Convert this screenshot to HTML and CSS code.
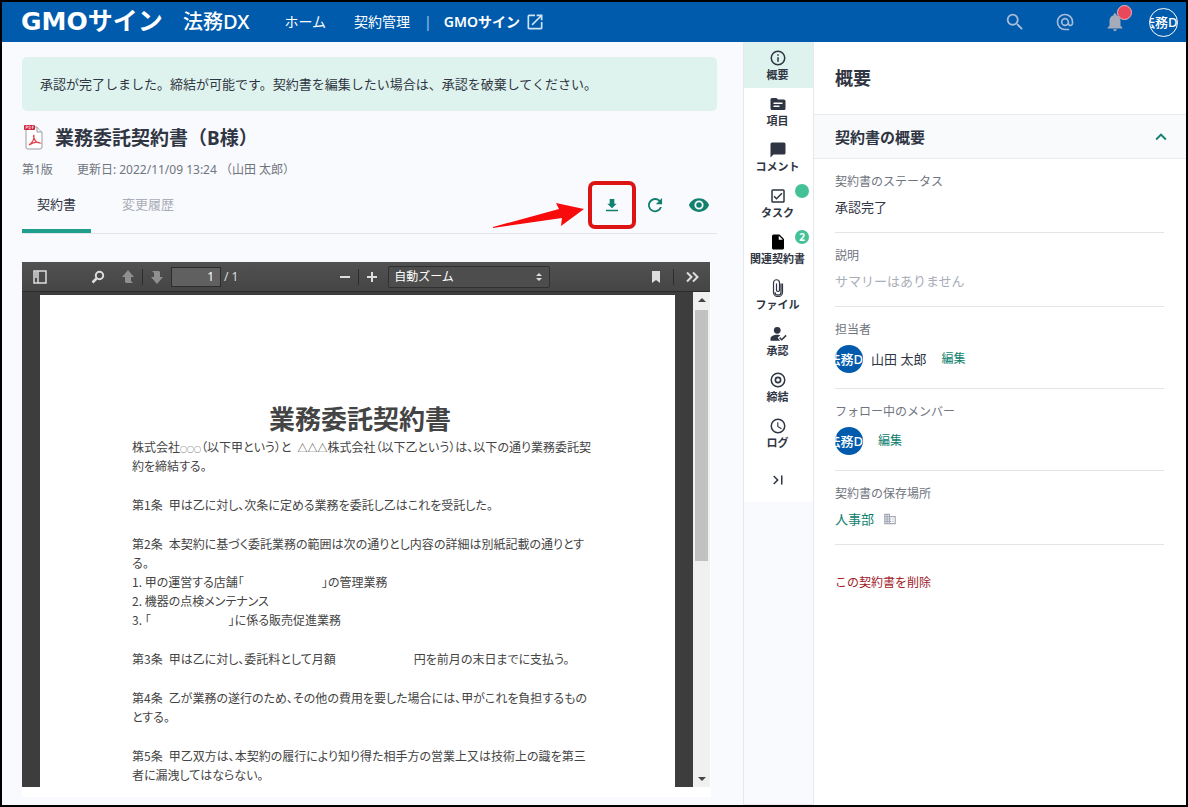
FILE: index.html
```html
<!DOCTYPE html>
<html lang="ja">
<head>
  <meta charset="UTF-8">
  <meta name="viewport" content="width=device-width, initial-scale=1.0">
  <title>業務委託契約書（B様）</title>
  <link rel="stylesheet" href="styles.css">
</head>
<body>
  <header class="header">
    <a class="logo" href="#"><span class="logo-name">GMOサイン</span><span class="logo-sub">法務DX</span></a>
    <nav class="nav">
      <a href="#">ホーム</a>
      <a href="#">契約管理</a>
      <span class="nav-line">|</span>
      <a class="nav-bold" href="#">GMOサイン
        <svg width="20" height="20" viewBox="0 0 24 24"><path d="M19 19H5V5h7V3H5a2 2 0 0 0-2 2v14a2 2 0 0 0 2 2h14c1.100 0 2-.9 2-2v-7h-2v7zM14 3v2h3.590l-9.830 9.830 1.410 1.410L19 6.410V10h2V3h-7z"/></svg>
      </a>
    </nav>
    <div class="header-tools">
      <button aria-label="検索"><svg width="22" height="22" viewBox="0 0 24 24"><path d="M15.500 14h-.79l-.28-.27A6.470 6.470 0 0 0 16 9.500 6.500 6.500 0 1 0 9.500 16c1.610 0 3.090-.59 4.230-1.570l.27.28v.79l5 4.990L20.490 19l-4.990-5zm-6 0a4.500 4.500 0 1 1 0-9 4.500 4.500 0 0 1 0 9z"/></svg></button>
      <button aria-label="メンション"><svg width="20" height="20" viewBox="0 0 24 24"><path d="M12 2a10 10 0 0 0 0 20h5v-2h-5c-4.340 0-8-3.660-8-8s3.660-8 8-8 8 3.660 8 8v1.430c0 .79-.71 1.570-1.500 1.570s-1.500-.78-1.500-1.570V12a5 5 0 1 0-1.460 3.540c.65.89 1.770 1.460 2.960 1.460 1.970 0 3.500-1.600 3.500-3.570V12A10 10 0 0 0 12 2zm0 13a3 3 0 1 1 0-6 3 3 0 0 1 0 6z"/></svg></button>
      <button class="bell" aria-label="通知"><svg width="22" height="22" viewBox="0 0 24 24"><path d="M12 22c1.100 0 2-.9 2-2h-4c0 1.100.9 2 2 2zm6-6v-5c0-3.070-1.640-5.640-4.500-6.320V4a1.500 1.500 0 0 0-3 0v.68C7.630 5.360 6 7.920 6 11v5l-2 2v1h16v-1l-2-2z"/></svg><span class="bell-dot"></span></button>
      <button class="avatar avatar-me"><span>法務DX</span></button>
    </div>
  </header>

  <main class="main">
    <section class="content">
      <p class="notice">承認が完了しました。締結が可能です。契約書を編集したい場合は、承認を破棄してください。</p>

      <div class="title-row">
        <svg width="20" height="26" viewBox="0 0 20 26">
          <path d="M3 2h10l5 5v15a2 2 0 0 1-2 2H4a2 2 0 0 1-2-2V3z" fill="#fff" stroke="#9a9da2"/>
          <path d="M13 2v5h5" fill="#eee" stroke="#9a9da2"/>
          <rect width="11" height="5" rx="1" fill="#d2233c"/>
          <path d="M2 4V1h1.500v1.500H2M5 1v3h1L7 2.500 6 1zM8.500 4V1h1.500M8.500 2.500h1" fill="none" stroke="#fff" stroke-width=".6"/>
          <path d="M5 20c3-2 5-5 5-9 0-1-1-1 0 2 1 3 3 5 6 5-3-2-8 0-11 2z" fill="none" stroke="#e2404c" stroke-width="1.200"/>
        </svg>
        <h1>業務委託契約書（B様）</h1>
      </div>
      <div class="meta"><span>第1版</span><span>更新日: 2022/11/09 13:24 （山田 太郎）</span></div>

      <div class="tabs">
        <button class="tab active">契約書</button>
        <button class="tab">変更履歴</button>
        <div class="actions">
          <button class="download" aria-label="ダウンロード">
            <svg width="16" height="16" viewBox="0 0 24 24"><path d="M19 10h-3.500V3h-7v7H5l7 7 7-7zM3 19v2.500h18V19H3z"/></svg>
            <svg class="arrow" width="94" height="26" viewBox="0 0 94 26"><path d="M1 24 67 6 64 0 92 6 69 23 70 15 1 25z"/></svg>
            <span class="marker"></span>
          </button>
          <button aria-label="更新"><svg width="20" height="20" viewBox="0 0 24 24"><path d="M18 6a8.500 8.500 0 1 0 2.300 8.500H18A6.300 6.300 0 1 1 16.400 7.600L13 11h7.500V3.500z"/></svg></button>
          <button aria-label="プレビュー"><svg width="22" height="22" viewBox="0 0 24 24"><path d="M12 4.500C7 4.500 2.730 7.610 1 12c1.730 4.390 6 7.500 11 7.500s9.270-3.110 11-7.500c-1.730-4.390-6-7.500-11-7.500zM12 17a5 5 0 1 1 0-10 5 5 0 0 1 0 10zm0-8a3 3 0 1 0 0 6 3 3 0 0 0 0-6z"/></svg></button>
        </div>
      </div>

      <div class="frame">
        <div class="viewer">
          <div class="toolbar">
            <div class="tool-group">
              <button class="tool-side" aria-label="サイドバー"><svg width="14" height="14" viewBox="0 0 14 14"><path d="M1 1h12v12H1zM5 1v12M2 3h2M2 5h2M2 7h2" fill="none" stroke="#ddd" stroke-width="1.500"/></svg></button>
              <button class="tool-find" aria-label="検索"><svg width="14" height="14" viewBox="0 0 14 14"><circle cx="8.500" cy="5.500" r="3.700" fill="none" stroke="#ddd" stroke-width="2"/><path d="M5.500 8.500 1.500 12.500" stroke="#ddd" stroke-width="2.500"/></svg></button>
              <button class="dim" aria-label="前のページ"><svg width="14" height="14" viewBox="0 0 14 14"><path d="M7 0 13 7H10V11l2 2H5L4 12V7H1z"/></svg></button>
              <span class="split"></span>
              <button class="dim" aria-label="次のページ"><svg width="14" height="14" viewBox="0 0 14 14"><path d="M7 14 1 7H4V3L2 1H9l1 1v5h3z"/></svg></button>
              <input class="page-no" type="text" value="1" aria-label="ページ">
              <span class="page-total">/ 1</span>
            </div>
            <div class="tool-group">
              <button aria-label="縮小"><svg width="12" height="12" viewBox="0 0 12 12"><path d="M1 5h10v2H1z"/></svg></button>
              <span class="split"></span>
              <button aria-label="拡大"><svg width="12" height="12" viewBox="0 0 12 12"><path d="M1 5h4V1h2v4h4v2H7v4H5V7H1z"/></svg></button>
              <div class="zoom-box">
                <select class="zoom" aria-label="ズーム"><option>自動ズーム</option></select>
                <svg class="zoom-mark" width="6" height="8" viewBox="0 0 6 8"><path d="M3 0 6 3H0zM3 8 0 5h6z"/></svg>
              </div>
            </div>
            <div class="tool-group tool-end">
              <button aria-label="ブックマーク"><svg width="10" height="14" viewBox="0 0 10 14"><path d="M1 1h8v12L5 10l-4 3z"/></svg></button>
              <span class="split"></span>
              <button aria-label="その他"><svg width="14" height="12" viewBox="0 0 14 12"><path d="M1 1.500 5.500 6 1 10.500M7 1.500 11.500 6 7 10.500" fill="none" stroke="#ddd" stroke-width="2"/></svg></button>
            </div>
          </div>
          <div class="viewer-body">
            <article class="page">
              <h2>業務委託契約書</h2>
              <p>株式会社<span class="small-mark">○○○</span>（以下甲という）と&ensp;<span class="tri-mark">△△△</span>株式会社（以下乙という）は、以下の通り業務委託契<br>約を締結する。</p>
              <p>第1条&ensp;甲は乙に対し、次条に定める業務を委託し乙はこれを受託した。</p>
              <p>第2条&ensp;本契約に基づく委託業務の範囲は次の通りとし内容の詳細は別紙記載の通りとす<br>る。<br>
                1. 甲の運営する店舗「<span class="blank"></span>」の管理業務<br>
                2. 機器の点検メンテナンス<br>
                3. 「<span class="blank"></span>」に係る販売促進業務</p>
              <p>第3条&ensp;甲は乙に対し、委託料として月額<span class="blank"></span>円を前月の末日までに支払う。</p>
              <p>第4条&ensp;乙が業務の遂行のため、その他の費用を要した場合には、甲がこれを負担するもの<br>とする。</p>
              <p>第5条&ensp;甲乙双方は、本契約の履行により知り得た相手方の営業上又は技術上の識を第三<br>者に漏洩してはならない。</p>
            </article>
            <div class="scrollbar">
              <svg width="8" height="5" viewBox="0 0 8 5"><path d="M4 0 8 4H0z"/></svg>
              <span class="thumb"></span>
              <svg width="8" height="5" viewBox="0 0 8 5"><path d="M4 5 0 1h8z"/></svg>
            </div>
          </div>
        </div>
      </div>
    </section>

    <nav class="rail">
      <button class="rail-item current"><svg width="18" height="18" viewBox="0 0 24 24"><path d="M11 7h2v2h-2zm0 4h2v6h-2zm1-9a10 10 0 1 0 0 20 10 10 0 0 0 0-20zm0 18a8 8 0 1 1 0-16 8 8 0 0 1 0 16z"/></svg>概要</button>
      <button class="rail-item"><svg width="18" height="18" viewBox="0 0 24 24"><path d="M20 6h-8l-2-2H4a2 2 0 0 0-2 2v12c0 1.100.9 2 2 2h16a2 2 0 0 0 2-2V8a2 2 0 0 0-2-2zm-6 10H6v-2h8v2zm4-4H6v-2h12v2z"/></svg>項目</button>
      <button class="rail-item"><svg width="18" height="18" viewBox="0 0 24 24"><path d="M20 2H4a2 2 0 0 0-2 2v18l4-4h14a2 2 0 0 0 2-2V4a2 2 0 0 0-2-2z"/></svg>コメント</button>
      <button class="rail-item"><svg width="18" height="18" viewBox="0 0 24 24"><path d="M19 3H5a2 2 0 0 0-2 2v14c0 1.100.9 2 2 2h14a2 2 0 0 0 2-2V5a2 2 0 0 0-2-2zm0 16H5V5h14v14zM18 9l-1.400-1.400-6.600 6.600-2.600-2.600L6 13l4 4z"/></svg>タスク<span class="badge"></span></button>
      <button class="rail-item"><svg class="ink" width="18" height="18" viewBox="0 0 24 24"><path d="M14 2H6a2 2 0 0 0-2 2v16c0 1.100.9 2 2 2h12a2 2 0 0 0 2-2V8l-6-6zm-1 7V3.500L18.500 9H13z"/></svg>関連契約書<span class="badge">2</span></button>
      <button class="rail-item"><svg width="20" height="18" viewBox="0 0 24 24"><path d="M18 6v11.500a6 6 0 0 1-12 0V5a4 4 0 0 1 8 0v10.500a2.500 2.500 0 0 1-4 0V6M16 6v11.500a4 4 0 0 1-8 0" fill="none" stroke="#2f3542" stroke-width="1.600"/></svg>ファイル</button>
      <button class="rail-item"><svg width="18" height="18" viewBox="0 0 24 24"><circle cx="11" cy="7" r="4.500"/><path d="M2 21v-3c0-3 5-5 9-5 2 0 3 .3 4 .8L11.500 17l3.500 4zM23.500 14.500 17 21l-3.500-3.500 1.400-1.400 2.100 2.100 5.100-5.100z"/></svg>承認</button>
      <button class="rail-item"><svg width="18" height="18" viewBox="0 0 24 24"><path d="M12 2a10 10 0 1 0 0 20 10 10 0 0 0 0-20zm0 18a8 8 0 1 1 0-16 8 8 0 0 1 0 16z"/><circle cx="12" cy="12" r="3.500" fill="none" stroke="#2f3542" stroke-width="2.200"/></svg>締結</button>
      <button class="rail-item"><svg width="18" height="18" viewBox="0 0 24 24"><path d="M12 2a10 10 0 1 0 0 20 10 10 0 0 0 0-20zm0 18a8 8 0 1 1 0-16 8 8 0 0 1 0 16zm.5-13H11v6l5.200 3.200.8-1.300-4.500-2.700V7z"/></svg>ログ</button>
      <button class="rail-item" aria-label="閉じる"><svg width="18" height="18" viewBox="0 0 24 24"><path d="M5.600 7.400 10.200 12l-4.600 4.600L7 18l6-6-6-6zM16 6h2v12h-2z"/></svg></button>
    </nav>

    <aside class="side">
      <h2 class="side-title">概要</h2>
      <h3 class="side-head">契約書の概要
        <svg width="22" height="22" viewBox="0 0 24 24"><path d="m12 8-6 6 1.410 1.410L12 10.830l4.590 4.580L18 14z"/></svg>
      </h3>
      <div class="side-body">
        <div class="item"><div class="label">契約書のステータス</div><div class="value">承認完了</div></div>
        <div class="item"><div class="label">説明</div><div class="value empty">サマリーはありません</div></div>
        <div class="item"><div class="label">担当者</div><div class="value"><span class="avatar"><span>法務DX</span></span><span class="person">山田 太郎</span><a class="edit" href="#">編集</a></div></div>
        <div class="item"><div class="label">フォロー中のメンバー</div><div class="value"><span class="avatar"><span>法務DX</span></span><a class="edit" href="#">編集</a></div></div>
        <div class="item"><div class="label">契約書の保存場所</div><div class="value"><a href="#">人事部</a><svg class="building" width="14" height="14" viewBox="0 0 24 24"><path d="M12 7V3H2v18h20V7H12zM6 19H4v-2h2v2zm0-4H4v-2h2v2zm0-4H4V9h2v2zm0-4H4V5h2v2zm4 12H8v-2h2v2zm0-4H8v-2h2v2zm0-4H8V9h2v2zm0-4H8V5h2v2zm10 12h-8v-2h2v-2h-2v-2h2v-2h-2V9h8v10zm-2-8h-2v2h2v-2zm0 4h-2v2h2v-2z"/></svg></div></div>
        <button class="delete">この契約書を削除</button>
      </div>
    </aside>
  </main>
</body>
</html>
```
FILE: styles.css
```css
* {
  box-sizing: border-box;
}
body {
  margin: 0;
  height: 100vh;
  border: 2px solid #000;
  display: flex;
  flex-direction: column;
  overflow: hidden;
  background: #f9fafd;
  color: #2f3542;
  font-family: "Noto Sans", "Noto Sans CJK JP", sans-serif;
  font-size: 13px;
  line-height: 20px;
}
h1, h2, h3, p { margin: 0; }
a { color: #0f7f6e; text-decoration: none; }
button {
  padding: 0;
  border: none;
  background: none;
  color: inherit;
  font: inherit;
  cursor: pointer;
}
svg { display: block; flex-shrink: 0; }

/* header */
.header {
  flex: 0 0 40px;
  display: flex;
  align-items: center;
  padding: 0 8px 0 19px;
  background: #005bac;
  color: #fff;
}
.header a { color: #fff; white-space: nowrap; }
.logo {
  display: flex;
  align-items: center;
  gap: 12px;
}
.logo-name {
  min-width: 150px;
  font-family: "DejaVu Sans", "Noto Sans CJK JP", sans-serif;
  font-size: 25px;
  font-weight: bold;
}
.logo-sub { font-size: 20px; font-weight: 500; }
.nav {
  display: flex;
  align-items: center;
  margin-left: 35px;
  font-size: 14px;
}
.nav a + a { margin-left: 28px; }
.nav-line { margin: 0 12px 0 14px; color: #a9c8e6; }
.nav-bold {
  display: flex;
  align-items: center;
  gap: 5px;
  font-weight: 600;
}
.nav svg { fill: #cfe3f5; }
.header-tools {
  margin-left: auto;
  display: flex;
  align-items: center;
  gap: 29px;
}
.header-tools svg { fill: #a7bcd8; }
.header-tools .bell svg { fill: #a5abb8; }
.bell { position: relative; }
.bell-dot {
  position: absolute;
  top: -6px;
  right: -6px;
  width: 15px;
  height: 15px;
  border: 1px solid #f3b6bd;
  border-radius: 50%;
  background: #e8485a;
}
.avatar {
  display: flex;
  justify-content: center;
  align-items: center;
  width: 28px;
  height: 28px;
  border-radius: 50%;
  overflow: hidden;
  background: #005bac;
  color: #fff;
  font-size: 13px;
  font-weight: 500;
  white-space: nowrap;
}
.avatar-me {
  margin-left: -6px;
  width: 29px;
  height: 29px;
  border: 1px solid #fff;
}

.main {
  flex: 1;
  min-height: 0;
  display: flex;
}

/* contract */
.content {
  flex: 1;
  min-width: 0;
  display: flex;
  flex-direction: column;
  padding: 15px 26px 8px 20px;
}
.notice {
  padding: 17px 18px;
  border-radius: 5px;
  background: #dff3ee;
}
.title-row {
  display: flex;
  align-items: center;
  gap: 11px;
  margin-top: 12px;
  padding-left: 2px;
}
h1 { font-size: 19px; line-height: 30px; }
.meta {
  display: flex;
  gap: 24px;
  margin-top: 7px;
  color: #6f7580;
  font-size: 12px;
}
.tabs {
  display: flex;
  margin-top: 5px;
  border-bottom: 1px solid #e2e6ea;
}
.tab {
  padding: 9px 15px 15px;
  border-bottom: 4px solid transparent;
  color: #a9aeb8;
}
.tab + .tab { margin-left: 16px; }
.tab.active {
  border-color: #1f9e8c;
  border-radius: 3px 3px 0 0;
  color: #2f3542;
}
.actions {
  margin-left: auto;
  display: flex;
  align-items: center;
  gap: 23px;
  padding: 0 7px 8px 0;
}
.actions svg { fill: #12806f; }
.download { position: relative; padding: 2px; }
.marker {
  position: absolute;
  top: -14px;
  left: -14px;
  width: 48px;
  height: 48px;
  border: 4px solid #dc1414;
  border-radius: 7px;
}
.actions .arrow {
  position: absolute;
  top: 8px;
  right: 36px;
  fill: #f80b0b;
}
.frame {
  flex: 1;
  min-height: 0;
  margin: 28px 6px 0 0;
  padding: 0 1px 10px 0;
  background: #fff;
}
.viewer {
  height: 100%;
  display: flex;
  flex-direction: column;
}
.toolbar {
  flex: 0 0 30px;
  display: flex;
  align-items: center;
  justify-content: space-between;
  padding: 0 10px 0 11px;
  border-bottom: 1px solid #2b2b2b;
  background: linear-gradient(#515151, #454545);
  color: #ddd;
  font-size: 12px;
}
.toolbar svg { fill: #ddd; }
.tool-group {
  display: flex;
  align-items: center;
  gap: 7px;
}
.tool-find { margin: 0 9px 0 37px; }
.toolbar .dim svg { fill: #8f8f8f; }
.split {
  width: 1px;
  height: 16px;
  background: #2c2c2c;
}
.page-no {
  width: 50px;
  height: 20px;
  padding: 0 6px;
  border: 1px solid #2c2c2c;
  background: #606060;
  color: #fff;
  font: inherit;
  text-align: right;
}
.page-total { margin-left: -4px; }
.zoom-box { position: relative; margin-left: 3px; }
.zoom {
  appearance: none;
  display: block;
  width: 162px;
  height: 22px;
  padding: 0 5px;
  border: 1px solid #303030;
  border-radius: 2px;
  background: #4d4d4d;
  color: #fff;
  font: inherit;
}
.zoom-mark {
  position: absolute;
  top: 7px;
  right: 8px;
}
.tool-end { gap: 12px; }
.viewer-body {
  flex: 1;
  min-height: 0;
  display: flex;
  gap: 18px;
  padding-left: 18px;
  background: #3d3d3d;
}
.page {
  flex: 1;
  margin-top: 3px;
  padding: 105px 87px 0 92px;
  background: #fff;
  color: #444;
  font-size: 12px;
  line-height: 19px;
  font-family: "Noto Sans CJK JP", sans-serif;
  font-feature-settings: "palt";
  white-space: nowrap;
  overflow: hidden;
}
.page h2 {
  margin-bottom: 1px;
  font-size: 26px;
  line-height: 36px;
  font-feature-settings: normal;
  text-align: center;
}
.page p { margin-bottom: 20px; }
.small-mark, .tri-mark { line-height: 1; }
.small-mark { font-size: 7px; font-weight: bold; }
.tri-mark { font-size: 10px; }
.blank { display: inline-block; width: 78px; }
.scrollbar {
  width: 17px;
  display: flex;
  flex-direction: column;
  align-items: center;
  padding: 6px 0;
  background: #f0f0f0;
}
.scrollbar svg { fill: #444; }
.scrollbar svg:last-child { margin-top: auto; }
.thumb {
  width: 13px;
  height: 52%;
  margin-top: 7px;
  background: #c1c1c1;
}

/* icon rail */
.rail {
  flex: 0 0 71px;
  border: 1px solid #e5e8ee;
  border-top: none;
}
.rail-item {
  position: relative;
  display: flex;
  flex-direction: column;
  align-items: center;
  justify-content: center;
  width: 100%;
  height: 46px;
  padding: 2px 2px 0 0;
  background: #fff;
  font-size: 11px;
  line-height: 16px;
  font-weight: bold;
}
.rail-item.current { background: #dff3ee; }
.rail-item svg { fill: #2f3542; }
.rail-item .ink { fill: #000; }
.badge {
  position: absolute;
  top: 4px;
  right: 4px;
  width: 14px;
  height: 14px;
  border-radius: 50%;
  background: #45c197;
  color: #fff;
  font-size: 10px;
  line-height: 14px;
}

/* summary */
.side {
  flex: 0 0 372px;
  background: #fff;
}
.side-title {
  padding: 22px 21px;
  font-size: 18px;
  line-height: 28px;
}
.side-head {
  display: flex;
  align-items: center;
  justify-content: space-between;
  height: 45px;
  padding: 0 14px 0 21px;
  border: solid #e8ebef;
  border-width: 1px 0;
  background: #f8fafc;
  font-size: 15px;
}
.side-head svg { fill: #12806f; }
.side-body { padding: 0 22px 0 21px; }
.item {
  padding: 13px 0 15px;
  border-bottom: 1px solid #e2e4e8;
}
.label { color: #6f7580; font-size: 12px; }
.value {
  display: flex;
  align-items: center;
  margin-top: 5px;
}
.empty { color: #a9aeb8; }
.person { margin-left: 8px; }
.edit { margin-left: 15px; font-size: 12px; }
.building { margin-left: 9px; fill: #a4a9b8; }
.delete {
  margin-top: 28px;
  color: #a1201f;
  font-size: 12px;
}
```
